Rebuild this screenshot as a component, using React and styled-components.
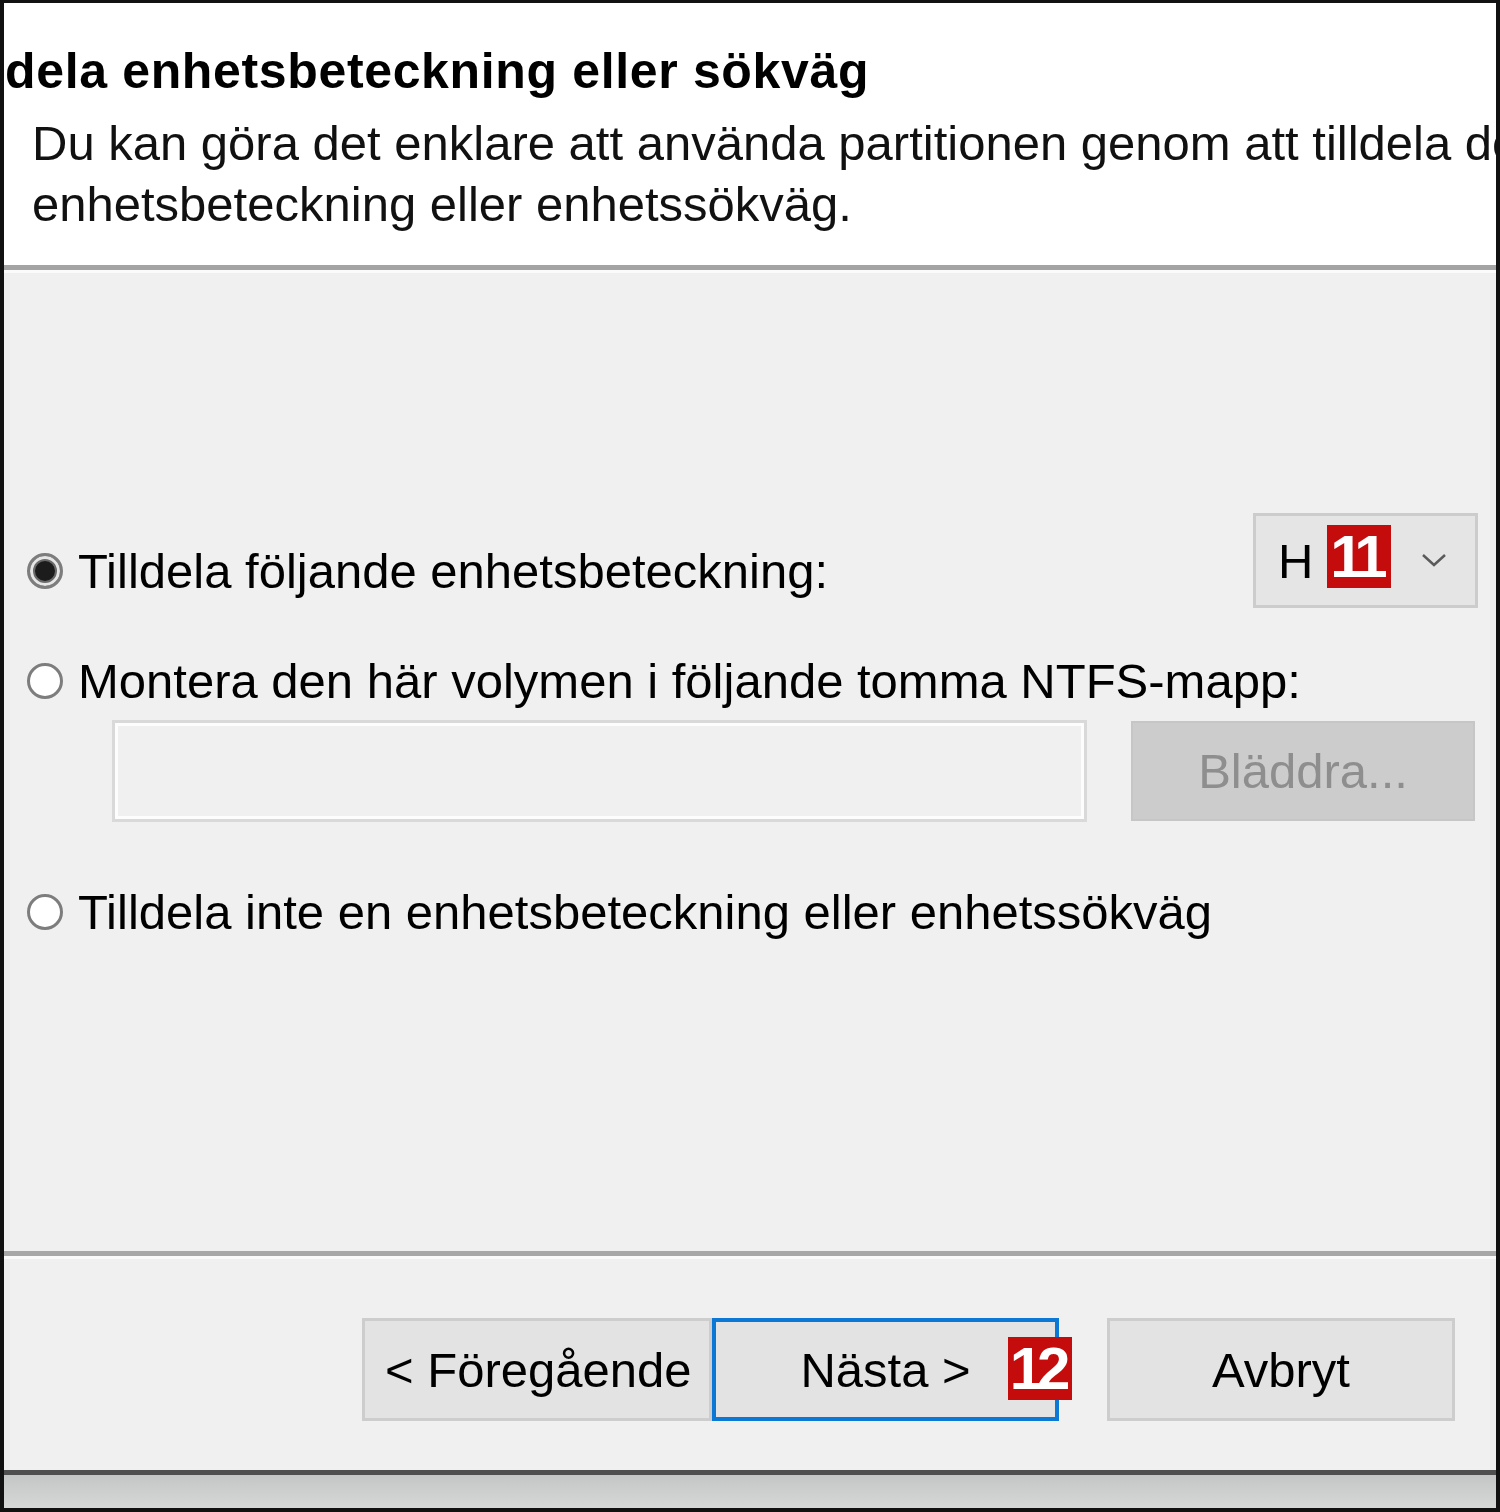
import React from 'react';
import styled, { createGlobalStyle } from 'styled-components';

const GlobalStyle = createGlobalStyle`
  html, body {
    margin: 0;
    padding: 0;
    background: #000;
  }
  * {
    box-sizing: border-box;
  }
`;

const Window = styled.div`
  width: 1500px;
  height: 1512px;
  display: flex;
  flex-direction: column;
  border-style: solid;
  border-color: #111;
  border-width: 3px 4px 4px 4px;
  background: #f0f0f0;
  font-family: "Liberation Sans", Arial, sans-serif;
  color: #000;
  overflow: hidden;
`;

const Header = styled.header`
  height: 262px;
  flex-shrink: 0;
  background: #fff;
  padding: 38px 0 0 28px;
  overflow: hidden;
  white-space: nowrap;
`;

const Title = styled.h1`
  margin: 0 0 12px -27px;
  font-size: 50px;
  line-height: 60px;
  font-weight: 700;
  letter-spacing: 0.65px;
`;

const Description = styled.p`
  margin: 0;
  font-size: 49px;
  line-height: 61px;
  color: #111;
`;

const Rule = styled.div`
  height: 8px;
  flex-shrink: 0;
  border-top: 5px solid ${(p) => p.$tone};
  border-bottom: 3px solid #fbfbfb;
`;

const Body = styled.main`
  flex: 1;
  display: flex;
  flex-direction: column;
  padding: 240px 18px 0 23px;
`;

const OptionRow = styled.div`
  display: flex;
  align-items: center;
  justify-content: space-between;
  height: ${(p) => p.$height || 50}px;
  margin-top: ${(p) => p.$gap || 0}px;
`;

const Option = styled.label`
  display: flex;
  align-items: center;
  gap: 15px;
  font-size: 49px;
  white-space: nowrap;
  padding-top: ${(p) => p.$shift || 0}px;
`;

const Radio = styled.span`
  width: 36px;
  height: 36px;
  border-radius: 50%;
  border: 3px solid #7d7d7d;
  background: #fff;
  flex-shrink: 0;
  box-shadow: ${(p) => (p.$checked ? 'inset 0 0 0 3px #e6e6e6, inset 0 0 0 5px #6a6a6a, inset 0 0 0 18px #1c1c1c' : 'none')};
`;

const Dropdown = styled.div`
  position: relative;
  width: 225px;
  height: 95px;
  display: flex;
  align-items: center;
  padding: 0 28px 0 22px;
  background: #e5e5e5;
  border: 3px solid #cccccc;
  font-size: 49px;
`;

const Chevron = styled.svg`
  margin-left: auto;
  width: 26px;
  height: 15px;
`;

const Badge = styled.span`
  position: absolute;
  left: ${(p) => p.$left}px;
  top: ${(p) => p.$top}px;
  width: 64px;
  height: 63px;
  display: flex;
  align-items: center;
  justify-content: center;
  background: #c40c0c;
  color: #fff;
  font-size: 60px;
  font-weight: 700;
  letter-spacing: -6px;
  padding-right: 6px;
  line-height: 1;
`;

const FolderRow = styled.div`
  display: flex;
  align-items: center;
  gap: 44px;
  margin: 14px 0 0 85px;
`;

const PathInput = styled.div`
  width: 975px;
  height: 102px;
  background: #f0f0f0;
  border: 3px solid #d9d9d9;
  box-shadow: inset 0 0 0 3px #fdfdfd;
`;

const BrowseButton = styled.div`
  width: 344px;
  height: 100px;
  display: flex;
  align-items: center;
  justify-content: center;
  background: #cccccc;
  border: 2px solid #c6c6c6;
  color: #8e8e8e;
  font-size: 49px;
`;

const Footer = styled.footer`
  height: 211px;
  flex-shrink: 0;
  display: flex;
  justify-content: flex-end;
  align-items: flex-start;
  padding: 59px 41px 0 0;
`;

const ButtonGroup = styled.div`
  display: flex;
`;

const Button = styled.div`
  position: relative;
  width: ${(p) => p.$width}px;
  height: 103px;
  display: flex;
  align-items: center;
  justify-content: ${(p) => (p.$align === 'left' ? 'flex-start' : 'center')};
  padding: ${(p) => (p.$align === 'left' ? '0 0 0 20px' : '0')};
  margin-left: ${(p) => p.$gap || 0}px;
  background: #e3e3e3;
  border: ${(p) => (p.$focused ? '4px solid #0a78d4' : '3px solid #cdcdcd')};
  font-size: 49px;
  white-space: nowrap;
`;

const BottomStrip = styled.div`
  height: 38px;
  flex-shrink: 0;
  border-top: 5px solid #4f4f4f;
  background: linear-gradient(#c4c6c5, #d6d8d7);
`;

const App = () => (
  <>
    <GlobalStyle />
    <Window>
      <Header>
        <Title>dela enhetsbeteckning eller sökväg</Title>
        <Description>
          Du kan göra det enklare att använda partitionen genom att tilldela den en
          <br />
          enhetsbeteckning eller enhetssökväg.
        </Description>
      </Header>
      <Rule $tone="#a4a4a4" />
      <Body>
        <OptionRow $height={95}>
          <Option $shift={20}>
            <Radio $checked />
            Tilldela följande enhetsbeteckning:
          </Option>
          <Dropdown>
            H
            <Badge $left={71} $top={9}>11</Badge>
            <Chevron viewBox="0 0 26 15">
              <path d="M2 2 L13 12 L24 2" fill="none" stroke="#5a5a5a" strokeWidth="2.5" />
            </Chevron>
          </Dropdown>
        </OptionRow>
        <OptionRow $gap={48}>
          <Option>
            <Radio />
            Montera den här volymen i följande tomma NTFS-mapp:
          </Option>
        </OptionRow>
        <FolderRow>
          <PathInput />
          <BrowseButton>Bläddra...</BrowseButton>
        </FolderRow>
        <OptionRow $gap={65}>
          <Option>
            <Radio />
            Tilldela inte en enhetsbeteckning eller enhetssökväg
          </Option>
        </OptionRow>
      </Body>
      <Rule $tone="#a8a8a8" />
      <Footer>
        <ButtonGroup>
          <Button $width={350} $align="left">&lt; Föregående</Button>
          <Button $width={347} $focused>
            Nästa &gt;
            <Badge $left={292} $top={15}>12</Badge>
          </Button>
          <Button $width={348} $gap={48}>Avbryt</Button>
        </ButtonGroup>
      </Footer>
      <BottomStrip />
    </Window>
  </>
);

export default App;
